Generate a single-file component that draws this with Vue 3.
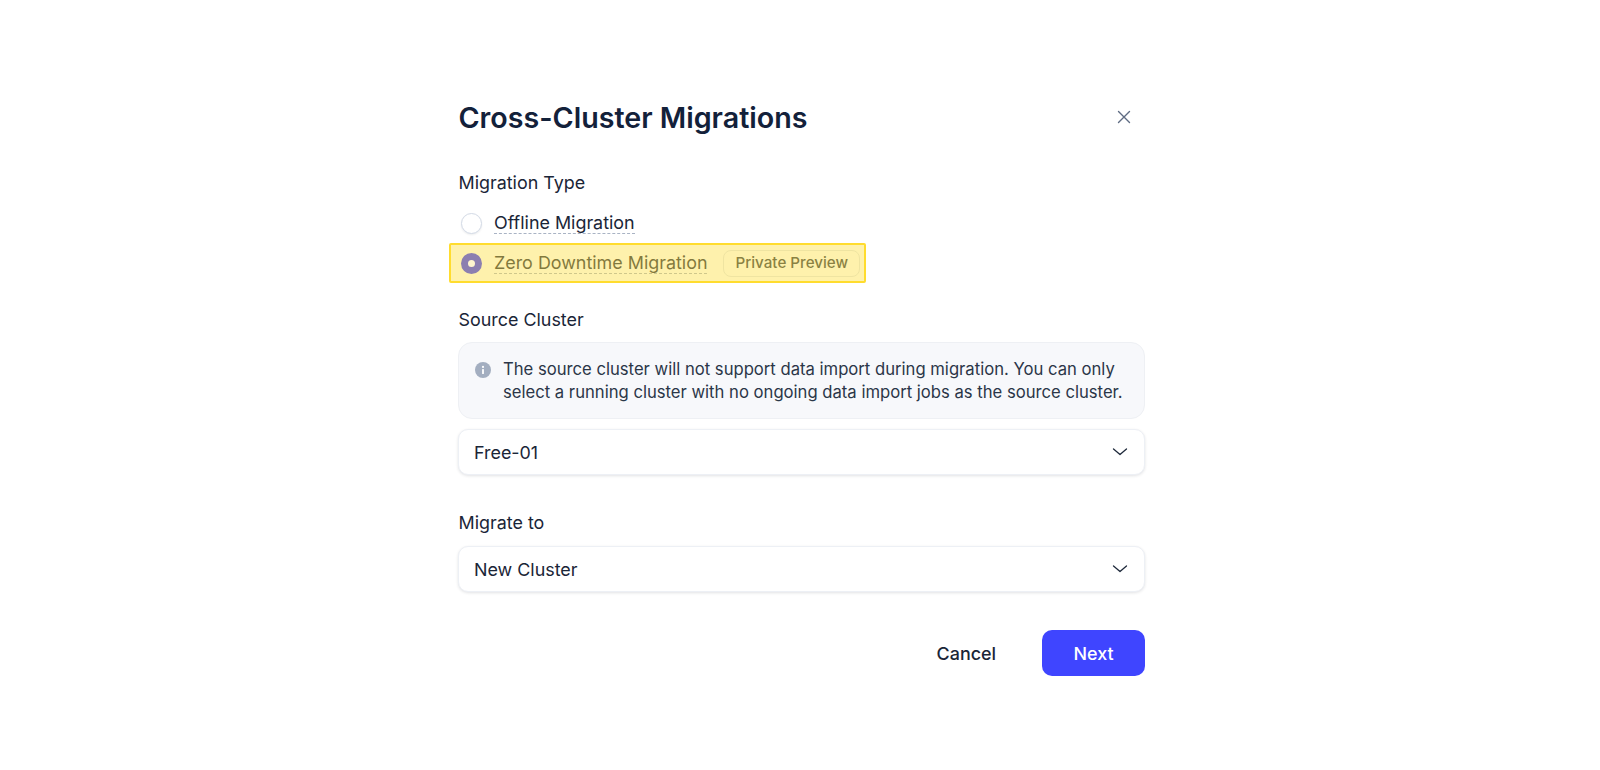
<template>
  <div class="page">
    <div class="modal">
      <header class="modal-head">
        <h1>Cross-Cluster Migrations</h1>
        <button class="close" aria-label="Close">
          <svg width="16" height="16" viewBox="0 0 16 16" fill="none">
            <path d="M2.5 2.5l11 11M13.5 2.5l-11 11" stroke="#5e6b82" stroke-width="1.4" stroke-linecap="round" />
          </svg>
        </button>
      </header>

      <label class="field-label type-label">Migration Type</label>
      <div class="radio-row">
        <span class="radio"></span>
        <span class="radio-text">Offline Migration</span>
      </div>
      <div class="radio-row selected">
        <span class="radio checked"></span>
        <span class="radio-text">Zero Downtime Migration</span>
        <span class="badge">Private Preview</span>
      </div>

      <label class="field-label source-label">Source Cluster</label>
      <div class="notice">
        <svg class="notice-icon" width="16" height="16" viewBox="0 0 16 16">
          <circle cx="8" cy="8" r="8" fill="#a3aec0" />
          <rect x="7.1" y="7" width="1.8" height="5" rx="0.6" fill="#fff" />
          <circle cx="8" cy="4.9" r="1.1" fill="#fff" />
        </svg>
        <p>The source cluster will not support data import during migration. You can only select a running cluster with no ongoing data import jobs as the source cluster.</p>
      </div>
      <div class="select">
        <span>Free-01</span>
        <svg width="16" height="16" viewBox="0 0 16 16" fill="none">
          <path d="M1.5 5L8 10.5l6.5-5.5" stroke="#1e293b" stroke-width="1.3" stroke-linecap="round" stroke-linejoin="round" />
        </svg>
      </div>

      <label class="field-label migrate-label">Migrate to</label>
      <div class="select">
        <span>New Cluster</span>
        <svg width="16" height="16" viewBox="0 0 16 16" fill="none">
          <path d="M1.5 5L8 10.5l6.5-5.5" stroke="#1e293b" stroke-width="1.3" stroke-linecap="round" stroke-linejoin="round" />
        </svg>
      </div>

      <footer class="modal-foot">
        <button class="btn-cancel">Cancel</button>
        <button class="btn-next">Next</button>
      </footer>
    </div>
  </div>
</template>

<script setup>
</script>

<style>
html,
body {
  background: #fff;
}
</style>

<style scoped>
.page {
  height: 770px;
  padding: 96px 0 0 458px;
  box-sizing: border-box;
  font-family: Inter, "Liberation Sans", sans-serif;
  color: #1a2537;
}

.modal {
  width: 687px;
}

.modal-head {
  display: flex;
  align-items: center;
  justify-content: space-between;
  height: 43px;
}

h1 {
  margin: 0;
  padding-left: 0.5px;
  font-size: 28.65px;
  font-weight: 600;
  line-height: 43px;
  color: #13213a;
}

.close {
  display: flex;
  padding: 0;
  margin-right: 13px;
  margin-top: -1px;
  border: 0;
  background: none;
}

.field-label {
  display: block;
  padding-left: 0.5px;
  font-size: 17.9px;
  font-weight: 400;
  line-height: 24px;
}

.type-label {
  margin-top: 32px;
}

.radio-row {
  display: flex;
  align-items: center;
  position: relative;
  height: 40px;
  font-size: 17.9px;
}

.type-label + .radio-row {
  margin-top: 8px;
}

.radio {
  flex: none;
  width: 19px;
  height: 19px;
  margin: 0 12px 0 3px;
  border: 1.5px solid #d3dae6;
  border-radius: 50%;
  background: #fff;
  box-shadow: 0 1px 2px rgb(15 23 42 / 0.08);
}

.radio.checked {
  position: relative;
  z-index: 1;
  box-sizing: content-box;
  width: 7px;
  height: 7px;
  border: 7.5px solid #8c7fb0;
  background: #fff6cf;
  box-shadow: none;
}

.radio-text {
  line-height: 21px;
  border-bottom: 1px dashed #a9b3c4;
}

.badge {
  margin-left: 16px;
  padding: 0 11px;
  height: 25px;
  line-height: 24px;
  font-size: 15.2px;
  font-weight: 500;
  color: #2c3340;
  border: 1px solid #e4e7ec;
  border-radius: 8px;
}

.selected::after {
  content: "";
  position: absolute;
  left: -9px;
  top: 0;
  width: 417px;
  height: 40px;
  box-sizing: border-box;
  border: 2px solid #ffdc2e;
  border-radius: 2px;
  background: rgb(253 224 71 / 0.45);
}

.source-label {
  margin-top: 25px;
}

.notice {
  display: flex;
  gap: 12px;
  margin-top: 10px;
  padding: 15px 16px 15px 16px;
  box-sizing: border-box;
  height: 77px;
  border: 1px solid #eef0f4;
  border-radius: 14px;
  background: #f7f8fb;
}

.notice-icon {
  flex: none;
  margin-top: 4px;
}

.notice p {
  margin: 0;
  font-size: 16.65px;
  line-height: 23px;
  color: #2b3648;
}

.select {
  display: flex;
  align-items: center;
  justify-content: space-between;
  height: 46px;
  margin-top: 10px;
  padding: 0 16px 0 15px;
  box-sizing: border-box;
  font-size: 17.9px;
  border: 1px solid #edf0f5;
  border-radius: 10px;
  background: #fff;
  box-shadow: 0 1px 3px rgb(15 23 42 / 0.12);
}

.migrate-label {
  margin-top: 36px;
}

.migrate-label + .select {
  margin-top: 11px;
}

.modal-foot {
  display: flex;
  justify-content: flex-end;
  align-items: center;
  gap: 46px;
  margin-top: 38px;
}

.btn-cancel,
.btn-next {
  font-family: inherit;
  font-size: 17.9px;
  font-weight: 500;
  border: 0;
  padding: 0;
}

.btn-cancel {
  background: none;
  color: #1a2537;
}

.btn-next {
  width: 103px;
  height: 46px;
  border-radius: 10px;
  background: #3f45ff;
  color: #fff;
}
</style>
